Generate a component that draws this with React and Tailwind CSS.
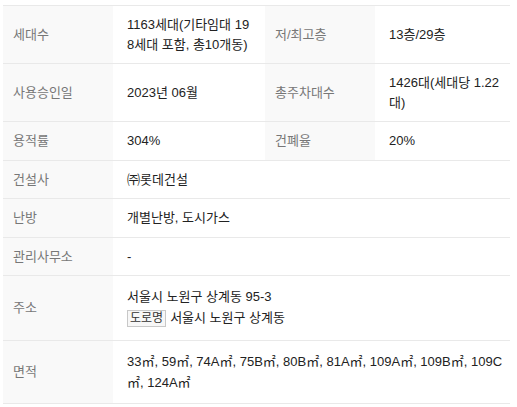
const rows = [
  [
    { label: '세대수', value: '1163세대(기타임대 198세대 포함, 총10개동)' },
    { label: '저/최고층', value: '13층/29층' },
  ],
  [
    { label: '사용승인일', value: '2023년 06월' },
    { label: '총주차대수', value: '1426대(세대당 1.22대)' },
  ],
  [
    { label: '용적률', value: '304%' },
    { label: '건폐율', value: '20%' },
  ],
];

const wideRows = [
  { label: '건설사', value: '㈜롯데건설' },
  { label: '난방', value: '개별난방, 도시가스' },
  { label: '관리사무소', value: '-' },
];

function Label({ children }) {
  return (
    <th className="bg-[#f9f9f9] pl-[10px] pr-2 text-left font-normal text-[#777] align-middle">
      {children}
    </th>
  );
}

function Value({ children, colSpan }) {
  return (
    <td colSpan={colSpan} className="pl-[14px] pr-[9px] py-[9px] text-[#222] break-all align-middle">
      {children}
    </td>
  );
}

export default function App() {
  return (
    <div className="bg-white min-h-[407px] pl-[3px] pt-[5px] font-['Liberation_Sans','Noto_Sans_CJK_KR',sans-serif] text-[13px] leading-[19.5px]">
      <table className="w-[507px] table-fixed border-collapse border-t border-[#e9e9e9]">
        <colgroup>
          <col className="w-[110px]" />
          <col className="w-[152px]" />
          <col className="w-[110px]" />
          <col className="w-[135px]" />
        </colgroup>
        <tbody>
          {rows.map((row, i) => (
            <tr key={i} className="border-b border-[#e9e9e9]">
              {row.map((cell) => [
                <Label key={cell.label + 'l'}>{cell.label}</Label>,
                <Value key={cell.label + 'v'}>{cell.value}</Value>,
              ])}
            </tr>
          ))}
          {wideRows.map((r) => (
            <tr key={r.label} className="border-b border-[#e9e9e9]">
              <Label>{r.label}</Label>
              <Value colSpan={3}>{r.value}</Value>
            </tr>
          ))}
          <tr className="border-b border-[#e9e9e9]">
            <Label>주소</Label>
            <td colSpan={3} className="pl-[14px] pr-[9px] pt-[11px] pb-[10px] text-[#222] align-middle">
              <div>서울시 노원구 상계동 95-3</div>
              <div className="flex items-center h-[23px]">
                <span className="inline-flex items-center h-[17px] px-[2px] border border-[#c8c8c8] bg-[#f7f7f7] text-[12px] leading-[15px] text-[#333]">
                  도로명
                </span>
                <span className="ml-[4px]">서울시 노원구 상계동</span>
              </div>
            </td>
          </tr>
          <tr className="border-b border-[#e9e9e9]">
            <Label>면적</Label>
            <td colSpan={3} className="pl-[14px] pr-[5px] pt-[10px] pb-[10px] leading-[21px] text-[#222] break-all align-middle">
              33㎡, 59㎡, 74A㎡, 75B㎡, 80B㎡, 81A㎡, 109A㎡, 109B㎡, 109C㎡, 124A㎡
            </td>
          </tr>
        </tbody>
      </table>
    </div>
  );
}
